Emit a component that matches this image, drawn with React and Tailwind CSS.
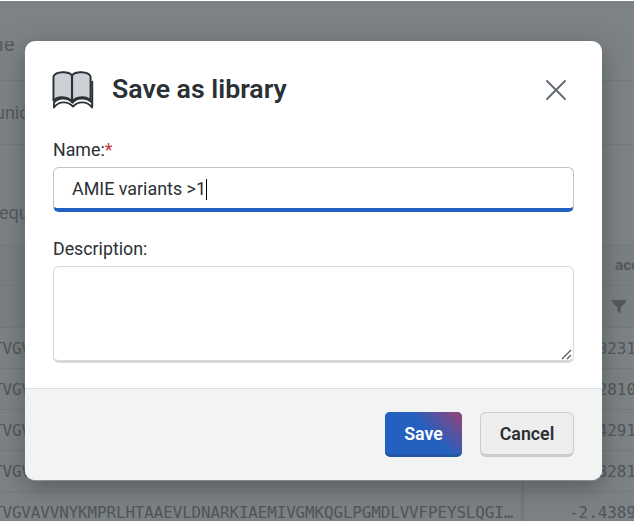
const SEQ = 'TVGVAVVNYKMPRLHTAAEVLDNARKIAEMIVGMKQGLPGMDLVVFPEYSLQGI…';
const ROWS = ['-2.3231', '-2.2810', '-2.4291', '-2.3281', '-2.4389'];

function BookIcon() {
  return (
    <svg width="42" height="40" viewBox="0 0 43 40" fill="none" strokeLinecap="round" strokeLinejoin="round" className="-ml-px shrink-0">
      <path d="M41.200 11.500V37" stroke="#2c3138" strokeWidth="2" />
      <path d="M2 38V33C7 26.500 17 28 21 33C25 28 35 26.500 41 33V38C36 30.500 26 31.500 21.500 37C17 31.500 7 30.500 2 38Z" fill="#fff" stroke="#2c3138" strokeWidth="1.9" />
      <path d="M1.500 31V6C4 .8 17 0.500 20.500 5C24 0.500 37 .8 39.500 6V31C36 26 25 26 20.500 32C16 26 5 26 1.500 31Z" fill="#cdd0d5" stroke="#2c3138" strokeWidth="2" />
      <path d="M20.500 5V32" stroke="#2c3138" strokeWidth="2.2" />
    </svg>
  );
}

function Backdrop() {
  return (
    <div className="flex h-[521px] flex-col overflow-hidden border-t border-white bg-[#7d8285] text-[#55595c]">
      <div className="h-10 shrink-0 bg-[#7d8284]" />
      <div className="h-10 shrink-0 overflow-hidden border-b border-[#757a7d]">
        <div className="-ml-[6px] -mt-[10px] text-[20px] leading-[26px]">ile</div>
      </div>
      <div className="flex h-16 shrink-0 items-center border-b border-[#757a7d] text-[18px]"><span className="-ml-[5px]">unique</span></div>
      <div className="flex h-[100px] shrink-0 items-end border-b border-[#757a7d] pb-[18px] text-[18px]"><span className="-ml-px">equence</span></div>
      <div className="h-[41px] shrink-0 border-b border-[#74797c] bg-[#7a7f82] pl-[615px] pt-2 text-[15.500px] font-bold leading-6">accuracy</div>
      <div className="flex h-[42px] shrink-0 items-center border-b border-[#74797c] bg-[#7a7f82] pl-[612px]">
        <svg width="14" height="14" viewBox="0 0 14 14" fill="currentColor"><path d="M0 0H14V2L8.700 7.500V13.500L5.300 11V7.500L0 2Z" /></svg>
      </div>
      {ROWS.map((n, i) => (
        <div key={i} className="flex h-[41px] shrink-0 border-b border-[#74797c] font-['DejaVu_Sans_Mono',monospace] text-[15.900px] leading-[42px] text-[#505558]">
          <div className="w-[524px] shrink-0 whitespace-nowrap border-r-[3px] border-[#74797c] tracking-[-0.11px]"><span className="-ml-[7px]">{SEQ}</span></div>
          <div className="shrink-0 pl-[45px]">{n}</div>
        </div>
      ))}
    </div>
  );
}

export default function App() {
  return (
    <div className="relative h-[524px] w-[634px] overflow-hidden bg-white font-[Roboto,sans-serif] text-[#2a3034]">
      <Backdrop />
      <div className="absolute left-[25px] top-[41px] flex h-[439px] w-[577px] flex-col overflow-hidden rounded-[10px] bg-white shadow-[0_8px_24px_rgba(50,56,56,0.5),0_1px_1px_rgba(200,205,208,0.8)]">
        <div className="flex h-[347px] flex-col px-7 pt-[29px]">
          <div className="flex h-10 items-center">
            <BookIcon />
            <h1 className="-mt-0.5 ml-[18px] text-[26.700px] font-semibold leading-9">Save as library</h1>
            <svg className="ml-auto mr-2" width="20" height="20" viewBox="0 0 20 20" stroke="#646a73" strokeWidth="1.900" strokeLinecap="round"><path d="M1 1L19 19M19 1L1 19" /></svg>
          </div>
          <div className="mt-7 text-[17.800px] leading-6">Name:<span className="text-[#c4303a]">*</span></div>
          <div className="mt-[5px] flex h-[45px] shrink-0 items-center rounded-[6px] border border-b-4 border-[#c4c4c4] border-b-[#2360bf] pl-[18px] pt-0.5 text-[17.900px]">AMIE variants &gt;1<span className="h-[21px] w-px bg-black" /></div>
          <div className="mt-[25px] text-[17.800px] leading-6">Description:</div>
          <div className="mt-[5px] flex h-[97px] shrink-0 items-end justify-end rounded-[6px] border border-b-[3px] border-[#d9d9d9]">
            <svg width="12" height="12" viewBox="0 0 12 12" stroke="#555" strokeWidth="1.2"><path d="M1 11L10 2M6 11L10 7" /></svg>
          </div>
        </div>
        <div className="flex flex-1 items-start justify-end gap-[18px] border-t border-[#d9dfe3] bg-[#f2f4f3] pr-7 pt-[23px] text-[17.800px] font-semibold">
          <button className="h-[45px] w-[77px] rounded-[5px] border-b-[3px] border-[#2456a5] bg-[linear-gradient(45deg,#2360bf_55%,#8d457c_96%)] bg-[#2360bf] pt-0.5 text-white">Save</button>
          <button className="h-[45px] w-[94px] rounded-[6px] border border-b-[3px] border-[#cbcbcb] bg-[#eee] pt-0.5">Cancel</button>
        </div>
      </div>
    </div>
  );
}
